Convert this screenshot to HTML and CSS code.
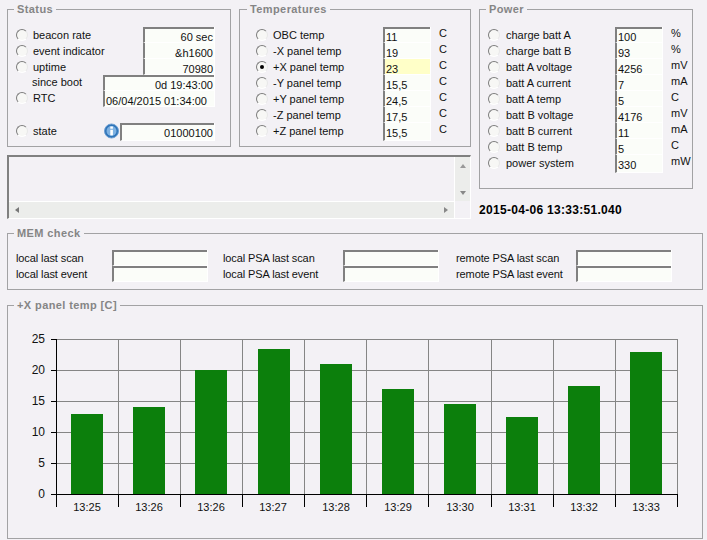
FILE: index.html
```html
<!DOCTYPE html>
<html lang="en">
<head>
<meta charset="utf-8">
<title>Telemetry</title>
<link rel="stylesheet" href="styles.css">
</head>
<body>
<div class="page">
  <div class="top">
    <div class="top-left">
      <div class="top-groups">
        <fieldset class="group status">
          <legend>Status</legend>
          <div class="row"><span class="radio"></span><span class="lbl">beacon rate</span><span class="field w72 right edge">60 sec</span></div>
          <div class="row"><span class="radio"></span><span class="lbl">event indicator</span><span class="field w72 right">&amp;h1600</span></div>
          <div class="row"><span class="radio"></span><span class="lbl">uptime</span><span class="field w72 right">70980</span></div>
          <div class="row"><span class="lbl sub up">since boot</span><span class="field w112 right edge">0d 19:43:00</span></div>
          <div class="row"><span class="radio up"></span><span class="lbl up">RTC</span><span class="field w112">06/04/2015 01:34:00</span></div>
          <div class="row state"><span class="radio"></span><span class="lbl">state</span>
            <svg class="info" width="15" height="16" viewBox="0 0 15 16"><circle cx="7.5" cy="8" r="7" fill="#2f74b8" stroke="#6d9fd2"/><circle cx="7.5" cy="8" r="5" fill="#7fb2e2"/><rect x="6.3" y="3.5" width="2.6" height="2.2" fill="#fff"/><rect x="6.3" y="6.8" width="2.6" height="5.5" fill="#fff"/></svg>
            <span class="field w95 right edge tall">01000100</span></div>
        </fieldset>
        <fieldset class="group temps">
          <legend>Temperatures</legend>
          <div class="row"><span class="radio"></span><span class="lbl">OBC temp</span><span class="field w48 edge">11</span><span class="unit">C</span></div>
          <div class="row"><span class="radio"></span><span class="lbl">-X panel temp</span><span class="field w48">19</span><span class="unit">C</span></div>
          <div class="row"><span class="radio on"></span><span class="lbl">+X panel temp</span><span class="field w48 hot">23</span><span class="unit">C</span></div>
          <div class="row"><span class="radio"></span><span class="lbl">-Y panel temp</span><span class="field w48">15,5</span><span class="unit">C</span></div>
          <div class="row"><span class="radio"></span><span class="lbl">+Y panel temp</span><span class="field w48">24,5</span><span class="unit">C</span></div>
          <div class="row"><span class="radio"></span><span class="lbl">-Z panel temp</span><span class="field w48">17,5</span><span class="unit">C</span></div>
          <div class="row"><span class="radio"></span><span class="lbl">+Z panel temp</span><span class="field w48">15,5</span><span class="unit">C</span></div>
        </fieldset>
      </div>
      <div class="log">
        <div class="log-main">
          <div class="log-text"></div>
          <div class="hbar"><span class="arr arr-l"></span><span class="arr arr-r"></span></div>
        </div>
        <div class="vbar"><span class="arr arr-u"></span><span class="arr arr-d"></span><span class="corner"></span></div>
      </div>
    </div>
    <div class="top-right">
      <fieldset class="group power">
        <legend>Power</legend>
        <div class="row"><span class="radio"></span><span class="lbl">charge batt A</span><span class="field w48 edge">100</span><span class="unit">%</span></div>
        <div class="row"><span class="radio"></span><span class="lbl">charge batt B</span><span class="field w48">93</span><span class="unit">%</span></div>
        <div class="row"><span class="radio"></span><span class="lbl">batt A voltage</span><span class="field w48">4256</span><span class="unit">mV</span></div>
        <div class="row"><span class="radio"></span><span class="lbl">batt A current</span><span class="field w48">7</span><span class="unit">mA</span></div>
        <div class="row"><span class="radio"></span><span class="lbl">batt A temp</span><span class="field w48">5</span><span class="unit">C</span></div>
        <div class="row"><span class="radio"></span><span class="lbl">batt B voltage</span><span class="field w48">4176</span><span class="unit">mV</span></div>
        <div class="row"><span class="radio"></span><span class="lbl">batt B current</span><span class="field w48">11</span><span class="unit">mA</span></div>
        <div class="row"><span class="radio"></span><span class="lbl">batt B temp</span><span class="field w48">5</span><span class="unit">C</span></div>
        <div class="row"><span class="radio"></span><span class="lbl">power system</span><span class="field w48">330</span><span class="unit">mW</span></div>
      </fieldset>
      <div class="stamp">2015-04-06 13:33:51.040</div>
    </div>
  </div>

  <fieldset class="group mem">
    <legend>MEM check</legend>
    <div class="mem-grid">
      <span class="lbl">local last scan</span><span class="field edge"></span>
      <span class="lbl">local PSA last scan</span><span class="field edge"></span>
      <span class="lbl">remote PSA last scan</span><span class="field edge"></span>
      <span class="lbl">local last event</span><span class="field edge"></span>
      <span class="lbl">local PSA last event</span><span class="field edge"></span>
      <span class="lbl">remote PSA last event</span><span class="field edge"></span>
    </div>
  </fieldset>

  <fieldset class="group chart">
    <legend>+X panel temp [C]</legend>
    <svg class="plot" width="694" height="226" viewBox="8 312 694 226">
      <g class="grid">
        <path d="M56.5 339.5H677.5M56.5 370.5H677.5M56.5 401.5H677.5M56.5 432.5H677.5M56.5 463.5H677.5"/>
        <path d="M118.5 339V494M180.5 339V494M242.5 339V494M304.5 339V494M366.5 339V494M428.5 339V494M491.5 339V494M553.5 339V494M615.5 339V494M677.5 339V494"/>
      </g>
      <g class="bars">
        <rect x="71" y="414" width="32" height="80"/>
        <rect x="133" y="407" width="32" height="87"/>
        <rect x="195" y="370" width="32" height="124"/>
        <rect x="258" y="349" width="32" height="145"/>
        <rect x="320" y="364" width="32" height="130"/>
        <rect x="382" y="389" width="32" height="105"/>
        <rect x="444" y="404" width="32" height="90"/>
        <rect x="506" y="417" width="32" height="77"/>
        <rect x="568" y="386" width="32" height="108"/>
        <rect x="630" y="352" width="32" height="142"/>
      </g>
      <g class="axis">
        <path d="M56.5 339V507M51 339.5H57M51 370.5H57M51 401.5H57M51 432.5H57M51 463.5H57M51 494.5H678"/>
        <path d="M118.5 494V507M180.5 494V507M242.5 494V507M304.5 494V507M366.5 494V507M428.5 494V507M491.5 494V507M553.5 494V507M615.5 494V507M677.5 494V507"/>
      </g>
      <g class="ylab">
        <text x="45" y="343">25</text>
        <text x="45" y="374">20</text>
        <text x="45" y="405">15</text>
        <text x="45" y="436">10</text>
        <text x="45" y="467">5</text>
        <text x="45" y="498">0</text>
      </g>
      <g class="xlab">
        <text x="87" y="511">13:25</text>
        <text x="149" y="511">13:26</text>
        <text x="211" y="511">13:26</text>
        <text x="273" y="511">13:27</text>
        <text x="336" y="511">13:28</text>
        <text x="398" y="511">13:29</text>
        <text x="460" y="511">13:30</text>
        <text x="522" y="511">13:31</text>
        <text x="584" y="511">13:32</text>
        <text x="646" y="511">13:33</text>
      </g>
    </svg>
  </fieldset>
</div>
</body>
</html>
```
FILE: styles.css
```css
* { box-sizing: border-box; }
html, body { margin: 0; padding: 0; background: #f3f1f5; }
body { width: 707px; height: 540px; overflow: hidden; font: 11px/13px "Liberation Sans", Arial, sans-serif; color: #111; }
.page { padding: 3px 0 0 7px; display: flex; flex-direction: column; }
.top { display: flex; gap: 8px; }
.top-left { width: 464px; display: flex; flex-direction: column; gap: 8px; }
.top-groups { display: flex; gap: 8px; }
.group { margin: 0; padding: 0; min-width: 0; border: 1px solid #a2a2a4; border-radius: 0; }
.group legend { margin-left: 6px; padding: 0 3px; font-weight: bold; color: #858585; letter-spacing: .4px; line-height: 13px; }
.status { width: 224px; height: 144px; padding-top: 11px; }
.status .row { padding: 0 15px 0 8px; }
.temps { width: 232px; height: 144px; padding-top: 11px; }
.temps legend { margin-left: 7px; }
.temps .row { padding: 0 17px 0 16px; }
.temps .row:last-child .field, .power .row:last-child .field { height: 18px; }
.power { width: 214px; height: 186px; padding-top: 11px; }
.power .row { padding: 0 7px 0 8px; }
.power .radio { margin-right: 6px; }
.row { display: flex; align-items: flex-start; height: 16px; }
.radio { flex: none; width: 12px; height: 12px; margin: 2px 5px 0 0; border-radius: 50%; background: #f7f7f5; border: 1px solid; border-color: #7d7d7d #e8e8e8 #fff #7d7d7d; position: relative; }
.radio.on::after { content: ""; position: absolute; left: 3px; top: 3px; width: 4px; height: 4px; border-radius: 50%; background: #000; }
.lbl { flex: 1; white-space: nowrap; line-height: 16px; }
.lbl.sub { padding-left: 16px; }
.up { position: relative; top: -1px; }
.field { display: block; flex: none; height: 16px; padding: 4px 1px 0 1px; background: #fbfdf9; border-left: 2px solid #808080; border-right: 1px solid #fff; border-bottom: 1px solid #fff; line-height: 13px; white-space: nowrap; }
.edge { box-shadow: inset 0 2px #808080; }
.right { text-align: right; }
.hot { background: #ffffc8; }
.w72 { width: 72px; }
.w112 { width: 112px; }
.w95 { width: 95px; }
.w48 { width: 48px; }
.unit { flex: none; width: 22px; padding-left: 8px; line-height: 13px; }
.state { margin-top: 16px; height: 18px; }
.tall { height: 18px; padding-top: 4px; }
.info { flex: none; margin: 0 1px 0 0; }
.log { width: 464px; height: 64px; display: flex; background: #f3f1f5; border-top: 2px solid #808080; border-left: 2px solid #808080; border-right: 1px solid #fff; border-bottom: 1px solid #fff; }
.log-main { flex: 1; display: flex; flex-direction: column; }
.log-text { flex: 1; }
.hbar { height: 17px; display: flex; justify-content: space-between; align-items: center; padding: 0 6px; background: #ecedeb; border-top: 1px solid #fff; }
.vbar { position: relative; width: 16px; display: flex; flex-direction: column; justify-content: space-between; align-items: center; padding: 7px 0 23px; background: #ecedeb; border-left: 1px solid #fff; }
.corner { position: absolute; left: 0; right: 0; bottom: 0; height: 17px; background: #f3f1f5; }
.arr { display: block; width: 0; height: 0; border: 3px solid transparent; }
.arr-l { border-right: 4px solid #777; border-left: 0; }
.arr-r { border-left: 4px solid #888; border-right: 0; }
.arr-u { border-bottom: 4px solid #999; border-top: 0; }
.arr-d { border-top: 4px solid #888; border-bottom: 0; }
.top-right { display: flex; flex-direction: column; }
.stamp { margin-top: 14px; font-weight: bold; font-size: 12px; letter-spacing: .3px; line-height: 14px; color: #000; white-space: nowrap; }
.mem { width: 696px; height: 63px; margin-top: 8px; padding-top: 10px; }
.mem-grid { display: grid; grid-template-columns: 96px 96px 135px 96px 137px 96px; grid-auto-rows: 16px; padding-left: 8px; }
.mem-grid .lbl { letter-spacing: -.1px; }
.mem-grid .lbl:nth-child(6n+3) { margin-left: 15px; }
.mem-grid .lbl:nth-child(6n+5) { margin-left: 17px; }
.chart { width: 696px; height: 240px; margin-top: 9px; }
.plot { display: block; }
.grid path { fill: none; stroke: #858585; stroke-width: 1; }
.bars rect { fill: #0c7f0c; }
.axis path { fill: none; stroke: #000; stroke-width: 1; shape-rendering: crispEdges; }
.ylab text { font: 12px "Liberation Sans", Arial, sans-serif; text-anchor: end; fill: #111; }
.xlab text { font: 11px "Liberation Sans", Arial, sans-serif; text-anchor: middle; fill: #111; }
```
